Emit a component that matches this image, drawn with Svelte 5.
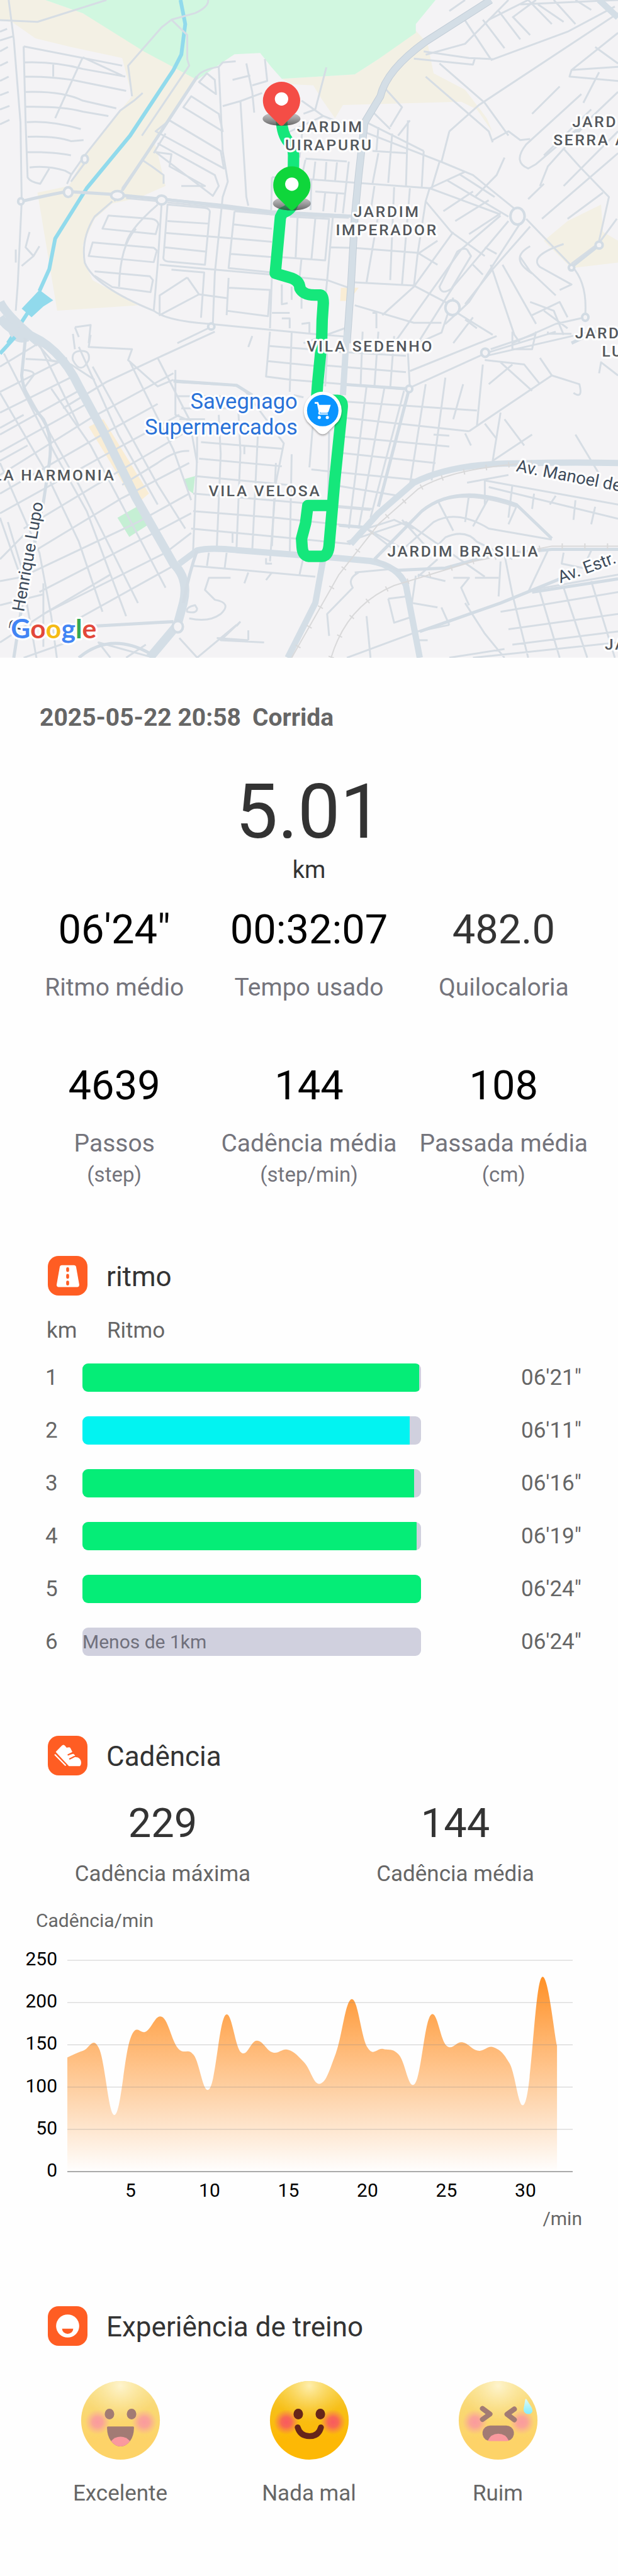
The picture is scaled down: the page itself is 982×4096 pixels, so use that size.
<script>
  const stats = [
    [
      { value: `06'24"`, label: 'Ritmo médio' },
      { value: '00:32:07', label: 'Tempo usado' },
      { value: '482.0', label: 'Quilocaloria', soft: true }
    ],
    [
      { value: '4639', label: 'Passos', unit: '(step)' },
      { value: '144', label: 'Cadência média', unit: '(step/min)' },
      { value: '108', label: 'Passada média', unit: '(cm)' }
    ]
  ];

  const splits = [
    { km: 1, time: `06'21"`, fill: 99.3 },
    { km: 2, time: `06'11"`, fill: 96.6, best: true },
    { km: 3, time: `06'16"`, fill: 97.9 },
    { km: 4, time: `06'19"`, fill: 98.7 },
    { km: 5, time: `06'24"`, fill: 100 },
    { km: 6, time: `06'24"`, fill: 0, note: 'Menos de 1km' }
  ];

  // Steps per minute, one value for each minute of the run
  const cadence = [
    135, 143, 146, 67, 158, 166, 183, 146, 138, 98, 185, 141, 155, 141, 144, 129,
    104, 140, 204, 147, 145, 138, 104, 185, 149, 153, 143, 147, 128, 83, 229, 149
  ];
  const left = 107;
  const right = 910;
  const base = 379;
  const perStep = 336 / 250;
  const stepX = 25.1;
  const px = (i) => left + i * stepX;
  const py = (v) => base - v * perStep;

  function areaPath(values) {
    const p = values.map((v, i) => [px(i), py(v)]);
    const at = (i) => p[Math.max(0, Math.min(p.length - 1, i))];
    let d = `M${left} ${base}L${p[0][0]} ${p[0][1]}`;
    for (let i = 1; i < p.length; i++) {
      const [a, b, c, e] = [at(i - 2), at(i - 1), at(i), at(i + 1)];
      const k = 0.2;
      d += `C${b[0] + (c[0] - a[0]) * k} ${b[1] + (c[1] - a[1]) * k} ${c[0] - (e[0] - b[0]) * k} ${c[1] - (e[1] - b[1]) * k} ${c[0]} ${c[1]}`;
    }
    return d + `V${base}Z`;
  }

  const area = areaPath(cadence);
  const yTicks = [250, 200, 150, 100, 50, 0];
  const xTicks = [5, 10, 15, 20, 25, 30];

  let mood = $state('Nada mal');
  const moods = ['Excelente', 'Nada mal', 'Ruim'];

  // Street network, north and south sheets of the map
  const northStreets = [
    'M0 92L95 100L270 0M22 0L35 180L52 560L55 920L45 1300L40 1420M0 185L35 165M0 145L18 132M0 235L20 215M0 300L20 283M0 370L22 350M0 435L22 420M0 500L24 484M0 568L24 548',
    'M60 212L310 300M60 212L65 560L70 810Q75 830 102 840L125 770M62 285Q140 280 210 315L318 350M62 350Q150 350 210 375L320 415M65 420Q160 415 210 460L295 495M65 488Q160 485 210 510L275 530M68 558Q130 550 205 590M70 625Q140 620 180 645L212 640M210 262L180 380L140 540M135 295V350M210 262L310 345M70 695Q140 695 180 710M75 765Q120 755 165 780L180 795',
    'M528 0Q530 30 495 60L435 90L410 125L325 300L335 440M435 90L475 160L475 270L480 300L360 620M362 425L340 460L305 505L215 710L180 800L170 840M360 730L385 760L415 800V840M215 745L180 830',
    'M598 280L565 285L555 305Q510 320 500 350L380 680L310 860M555 305L565 690L578 830L565 900L545 1250L540 1480M565 485L610 462L665 425M610 462L625 900L630 940M625 290L640 420L645 515M590 365L635 345M672 270L678 370L640 390',
    'M525 335L545 365L548 430L505 375ZM485 440L555 520L565 600L465 490ZM430 550L560 690L568 770L395 600ZM400 655L545 800L555 850L540 895L395 695L435 705L430 760L520 850L460 850M420 610L390 700',
    'M55 920Q110 895 170 875M190 878L285 888M310 895L400 905M425 910L560 935L690 965L890 985M320 905L395 918M425 925L560 950L690 980L885 995M310 870L290 920M285 920L240 990Q205 1090 215 1200Q240 1310 390 1420Q420 1460 500 1475L560 1485L790 1525L890 1540M410 930L400 1210L390 1420',
    'M425 935L520 950Q535 955 532 975L520 1210L425 1195Q412 1190 415 1170ZM425 1010L530 1022M422 1065L560 1085L690 1105M418 1130L525 1150M595 965L690 980M595 965L580 1225L690 1245M592 1025L690 1045M585 1160L690 1175M735 990L835 1000L825 1190L710 1175M755 995L750 1180M800 998L790 1188M765 1180L760 1270',
    'M275 985L385 1000Q400 1005 402 1025L395 1070L260 1045ZM400 935Q320 1060 318 1130M235 1108L390 1132L398 1145L390 1198L225 1170ZM345 1045Q305 1120 302 1310M240 1240L380 1262L388 1280L382 1335L285 1312L240 1260',
    'M405 1210L690 1255L830 1280L885 1315M435 1232L518 1245L510 1452M475 1268L405 1350V1440L505 1345L475 1268M505 1345L575 1362M580 1270L575 1440M580 1315L685 1325L680 1445L575 1420M690 1255L685 1500M715 1300V1390L730 1385M740 1310V1370M765 1350V1410M690 1430H735M715 1455H735V1500M765 1480L785 1475V1520',
    'M828 308L800 500L770 520M765 460L820 530L1120 740L1200 800L1310 960M820 530L725 610M770 545L760 720M775 725L880 738M775 730L765 810M800 738L795 820M828 740L825 825M855 742L850 828M690 810L790 820L900 835L1090 860L1180 785M690 810L688 960M790 820L788 960M800 875L875 885M825 880L820 965M855 885L850 970M885 738L870 975',
    'M920 550L1075 690M945 690L1030 700M960 580L955 690M995 610L985 835M1035 550L1030 850M1075 690L1070 855M1115 740L1095 860M975 400L1020 490L990 580M945 510L990 590M1010 620L1040 550M960 700L945 840M950 850L940 970M1000 855L990 1280M1040 860L1020 1300M960 980L930 1290M845 980L830 1280L825 1370M835 1130L900 1133L1060 1155L1110 1210',
    'M1090 860L1080 920L1145 1060L1230 1170M1090 860L1135 890L1270 980M1080 920L1060 1155L1050 1310L970 1440M1135 825L1290 990M1165 795L1255 900M1125 965L1200 875M1155 1010L1240 915M1190 1070L1270 975M900 1290L1050 1305L1140 1390M900 1395L1050 1475L1120 1475M1110 1100L1060 1160M1150 1060L1050 1310',
    'M1270 985L1170 1140L1000 1568M1290 1010L1150 1310L1060 1568M1320 1020L1190 1380L1155 1440M1345 1035L1250 1230L1180 1390M1335 1000L1450 1215Q1490 1290 1485 1435M1245 1210L1305 1530L1320 1568M1275 1210L1360 1480M1320 1175L1345 1240L1410 1350M1345 1125Q1290 1180 1350 1250M1430 1115Q1340 1170 1370 1220L1450 1300L1420 1325M1230 1130L1260 1160M1200 1210L1225 1255',
    'M1185 1140L1195 1170L1145 1320Q1120 1350 1115 1310L1160 1150Q1175 1130 1185 1140M1450 1205L1520 1110L1565 1000M1290 0L1180 200L1080 250M1320 20L1568 0M1560 30L1440 145L1245 275M1075 235L1190 265L1250 270M1050 268L1200 295L1205 265M1175 80L1245 270M1225 90L1280 220M1265 50L1320 180M1300 75L1345 160M1340 0L1400 110M1365 20L1430 100M1405 0L1460 110M1460 0L1500 45M1360 0L1300 80',
    'M1568 60L1215 480L1140 600M1080 350L1240 600L1250 650M1115 290L1230 470L1290 620M1250 640L1290 600L1320 640L1345 635M1568 150L1450 320L1445 350L1568 370M1510 215L1568 290M1450 320L1568 305M1140 50L1180 0M1140 600L1120 740M1340 0L1240 90',
    'M1475 430L1335 660Q1300 740 1340 770L1360 750L1470 580M1500 500L1380 710M1568 600L1430 850M1568 700L1375 1000M1280 720L1260 800L1205 900M1420 395L1350 520M1490 560L1400 740M1568 420L1440 640M1520 330L1480 470M1370 850L1390 760L1430 680L1470 760L1545 900L1520 1100M1340 910L1380 840M1530 880L1440 1000',
    'M1130 1480L1160 1430L1250 1530M1150 1360L1120 1520L1060 1568M1300 1568L1410 1480L1485 1450M1380 1420L1440 1500M1345 1380L1405 1420L1430 1530M1350 1440L1420 1380L1440 1450M1180 1460L1210 1500M945 1430H955V1500M1200 1450L1150 1568M190 1495L230 1485L225 1568M190 1495L200 1540M540 1490L450 1568M770 1568L890 1490M75 1060L65 1130L85 1170L55 1215M100 1125L85 1170M40 1140V1200'
  ];
  const southStreets = [
    'M0 160L110 40M0 275L170 120M0 370L190 200M0 470L210 260M0 550L230 320M0 655L235 390L440 190M0 740L260 470L400 330M0 830L270 560L455 380M60 900L300 640L480 450M90 1000L310 760L480 600M80 1100L350 870L480 740M100 1190L390 920L485 830M110 1290L420 1010L485 920M200 1310L450 1060',
    'M0 280L110 620L200 960L260 1280M10 100L140 560L220 820L320 1300M60 250L200 700L350 1240M130 260L230 520L420 1170M400 120L480 400L500 600M330 140L440 540L485 770M235 160L400 700L470 900M100 60L200 430M0 600L100 1010L130 1300L150 1568M0 850L60 1160L100 1568M200 70L300 470L400 790',
    'M75 15L130 130L180 150M60 175Q90 180 85 200L60 260M65 125L120 130L180 150L240 220M0 440L60 380M0 590L70 520M230 15L225 70L335 80L325 130L400 250L440 220M190 80L185 10M545 0L400 120L270 230L160 350M205 88Q180 90 185 130Q205 200 225 130Q230 85 205 88',
    'M445 175V380L485 410M445 230L590 245Q615 250 630 290L720 510L700 690M450 295H560M460 350H590M455 400H520M500 410V570L490 1000M555 380L560 560L550 990M605 370L610 550L600 995M655 440L640 1000M510 505L715 535M505 580L715 615M495 660L730 700M490 740L945 810M490 820L700 850L930 895M485 900L890 970M480 545Q445 540 400 600L310 700M590 920V965M620 520V560M700 690L685 1050',
    'M685 0L675 205L740 220L1040 265M680 65L820 85M680 135L820 160M740 0L735 275M745 290L770 300M840 90L1030 110M830 155L1030 185M830 90L825 250M920 0L915 240M960 0L950 250M1000 20L990 260M1035 100L1040 260M640 20L630 70',
    'M800 290L785 620M835 460L830 1040M880 320L1210 360M880 395L1190 455M875 480L1140 525M870 555L1105 600M790 630L1070 680M860 705L1010 750M845 800L940 815M930 250L885 900M975 260L910 900M1025 270L940 850M1080 240L1040 700M1130 210L1095 680M1175 240L1150 400M1225 150L1210 430M1270 370L1250 590L1350 470M1280 400L1330 520M1190 455L1400 200L1470 240Q1480 310 1455 280',
    'M740 560L735 1030M700 600L690 980M1140 475L1100 470M1180 465L1195 520M1230 420L1260 490M1460 470L1520 650M1035 260L1230 100L1410 0M1245 80L1360 10M1235 110L1500 0M1040 180L1260 20M1230 130L1330 150L1370 240M1270 140L1350 270M1300 150L1240 240M1370 120L1400 200M1300 0V80H1350L1360 0M1520 190L1525 140L1568 200M1390 0V10H1450',
    'M1230 680L1568 790M1240 710L1568 855M1230 675V790M1300 700L1290 850M1355 740L1350 810M1410 750L1395 790M1460 770L1455 860M1510 800L1500 880M1290 655L1185 690M880 960L1030 870L1230 1120M950 1040L1070 820Q1150 700 1310 800M1000 1030L1100 870Q1160 810 1240 900L1400 950M1080 1030L1130 940Q1180 900 1210 960L1300 1040M930 900L1020 990M1020 860L1090 1000M1110 770L1150 910M1190 745L1180 870M1240 760L1200 890M1310 800L1290 880M1010 1010L930 900L1000 860L1050 900',
    'M490 1070L620 1090L800 1120M530 1010L525 1070M575 1010L570 1080M630 1100L620 1150M690 1100L675 1135M675 1035V1060H690M770 1030L760 1110M585 1125H530L520 1180L545 1225Q590 1240 560 1290Q530 1330 480 1310M495 1250Q470 1260 475 1280Q500 1290 500 1265ZM455 1400L540 1568M600 1340L500 1490M610 1325L560 1410L670 1420M630 1365V1410M550 1400L630 1410M610 1325L600 1345',
    'M910 1100Q880 1130 895 1170L830 1290L835 1390M990 1085L900 1100M1055 1115L1045 1240L1110 1260M1060 1110L1130 1140M1150 1125H1190L1170 1170L1190 1250M1205 1125H1265M985 1220L1030 1210M985 1220L1000 1330L1050 1300M930 1300L940 1490M1110 1040L1060 1120M1270 1050L1265 1210M1350 1180L1568 1110M1280 1020L1300 1200M1390 1000L1340 1190M1430 1010L1425 1060L1480 1080M1500 1000L1480 1080',
    'M1270 1280L1568 1190M1290 1360L1568 1290M1300 1430L1568 1370M1200 1490L1568 1420M1140 1490L1280 1450M1300 1200L1340 1490M1370 1190L1420 1490M1430 1170L1490 1490M1500 1140L1560 1490M1120 1260L1140 1340M1180 1240L1230 1380L1280 1490M1060 1370L1140 1340M1060 1410H1085M880 1490L1060 1370',
    'M0 1140L60 1120M0 1250L110 1200M20 870L60 1110M0 1420L120 1280L280 1110M60 1490L170 1420L230 1340M280 1490L250 1420L390 1490M0 1040L60 930M110 1150V1440M320 1490L370 1430'
  ];
</script>

<main class="page">
  <svg class="map" viewBox="0 0 1080 1150" role="img" aria-label="Mapa do percurso">
    <defs>
      <linearGradient id="shade" x1="0" y1="0" x2="0" y2="1">
        <stop offset="0" stop-color="#777" stop-opacity=".35" />
        <stop offset="1" stop-color="#333" stop-opacity=".75" />
      </linearGradient>
    </defs>
    <rect width="1080" height="1150" fill="#f4f3f5" />

    <g transform="scale(.6888 .3827)">
      <path fill="#f3f0e4" d="M0 0H115L210 60L500 365L470 440L390 640L400 700L420 850L350 905L285 930L240 1000L210 1120L215 1200L235 1280L350 1395L145 1420L95 880L175 850L215 710L305 505L335 440L310 265L180 215L90 175L30 100L0 95ZM1055 140L960 270L900 340L715 360L740 385L795 390L815 450L850 540L870 480L1170 465L1210 500L1250 605L1235 540L1180 410L1100 335L1085 200ZM1380 1100L1440 1010L1525 935L1530 1060L1568 1100V1200L1450 1225Z" />
      <path fill="#f9edd5" d="M865 1315L910 1315L885 1375H863Z" />
      <path fill="#d1f7e0" d="M115 0H1105L1055 110V150L960 270L900 340L715 360L690 310L660 242L595 248L560 290L500 365L365 235L210 60Z" />
      <path class="river" d="M458 0L470 110L460 250L440 320L330 620L220 860L140 1090L125 1230L100 1330M70 1430L20 1568" />
      <path fill="#91daec" d="M100 1325L135 1372L110 1400L80 1450L55 1410Z" />
      {#each northStreets as d}<path class="street" {d} />{/each}
      <path class="road" d="M55 920Q110 895 170 875L285 888L400 908L560 940L690 970L890 988M310 870L380 680L500 350M1450 1568L1530 1500M1520 1120L1450 1220" />
      <path class="avenue edge" d="M1245 0L1080 190Q980 320 965 440L925 560L910 800L900 990L890 1320L880 1568" />
      <path class="avenue" d="M1245 0L1080 190Q980 320 965 440L925 560L910 800L900 990L890 1320L880 1568M1520 0L1568 80" />
      <path class="avenue wide" d="M0 1380Q15 1440 100 1568M25 1450Q30 1568 70 1540" />
      <g class="round">
        <ellipse cx="173" cy="878" rx="11" ry="22" /><ellipse cx="298" cy="893" rx="16" ry="20" />
        <ellipse cx="410" cy="914" rx="13" ry="20" /><ellipse cx="1313" cy="988" rx="18" ry="38" />
        <ellipse cx="1148" cy="1406" rx="18" ry="34" /><ellipse cx="1520" cy="1120" rx="9" ry="16" />
        <ellipse cx="1450" cy="1223" rx="7" ry="13" /><ellipse cx="536" cy="1492" rx="8" ry="14" />
        <ellipse cx="1485" cy="1450" rx="8" ry="16" /><ellipse cx="215" cy="727" rx="8" ry="18" />
        <ellipse cx="53" cy="920" rx="7" ry="14" />
      </g>
    </g>

    <g transform="translate(0 580) scale(.6888 .3827)">
      <path fill="#f9edd5" d="M225 435L262 400L378 740L345 790Z" />
      <path fill="#c5efd4" d="M298 850L352 795L378 880L328 938ZM465 675L495 660L490 740L475 720Z" />
      <path class="river" d="M38 25L0 100" />
      {#each southStreets as d}<path class="street" {d} />{/each}
      <path class="road" d="M65 20L55 200Q60 300 110 400Q135 480 125 600L110 780L60 1200L35 1490M440 225L600 245L640 290M1038 262L960 800M865 240L1038 262M860 885L930 895L885 970M950 1040L1070 820Q1160 690 1310 790L1400 945" />
      <path class="avenue wide" d="M0 -65Q25 0 60 5Q150 60 200 250L260 450L345 760L440 1060Q480 1130 465 1240L450 1340L380 1490" />
      <path class="avenue" d="M880 0L870 290M455 1060L500 1000Q530 985 600 998L860 1035L940 1048Q1010 1070 1030 1160L1065 1490M820 1040L800 1240L730 1490M1568 600Q1440 595 1320 602Q1150 600 1050 690L960 830L890 970" />
      <path class="road" d="M1065 1370L1270 1240L1420 1130M1350 1190L1568 1130M950 1040L1010 1090L1130 1080L1250 1020L1400 995H1568M500 1000Q480 1100 465 1240M240 1345L440 1325M200 1490Q280 1370 380 1470" />
      <path class="rail" d="M1350 600Q1150 620 1060 720L960 880L860 1110L740 1490M840 1490Q880 1250 1000 1160L1200 1050L1400 980H1568" />
      <path class="rail ties" d="M1350 600Q1150 620 1060 720L960 880L860 1110L740 1490M840 1490Q880 1250 1000 1160L1200 1050L1400 980H1568" />
      <g class="round">
        <ellipse cx="451" cy="1348" rx="13" ry="26" /><ellipse cx="1231" cy="96" rx="10" ry="19" />
        <ellipse cx="1038" cy="262" rx="8" ry="15" />
      </g>
    </g>

    <path class="route" d="M492 210Q493 235 504 248Q514 258 513 275L512 355Q508 368 494 372L490 380L481 478L505 485Q524 490 524 504Q530 516 550 516H560Q565 517 565 530L563 560L562 600L555 672L553 700" />
    <path class="route" d="M570 700H590Q599 700 598 712L585 840L575 955Q573 972 562 973H540Q529 972 528 957L527 942L534 915L538 884H578" />

    <g class="place" text-anchor="middle">
      <text x="577" y="231">JARDIM</text><text x="575" y="263">UIRAPURU</text>
      <text x="676" y="379">JARDIM</text><text x="676" y="411">IMPERADOR</text>
      <text x="647" y="615">VILA SEDENHO</text><text x="463" y="868">VILA VELOSA</text>
      <text x="810" y="973">JARDIM BRASILIA</text>
    </g>
    <g class="place">
      <text x="1000" y="222">JARD</text><text x="967" y="254">SERRA A</text>
      <text x="1005" y="592">JARD</text><text x="1052" y="624">LU</text>
      <text x="1057" y="1136">JA</text>
      <text x="202" y="840" text-anchor="end">LA HARMONIA</text>
    </g>
    <g class="roadname">
      <text transform="translate(901 824) rotate(11)">Av. Manoel de</text>
      <text transform="translate(979 1020) rotate(-20)">Av. Estr.</text>
      <text transform="translate(36 1104) rotate(-80)">R. Henrique Lupo</text>
    </g>
    <g class="shop" text-anchor="end">
      <text x="520" y="715">Savegnago</text><text x="520" y="760">Supermercados</text>
    </g>

    <g class="cartpin" transform="translate(564 718)">
      <path fill="#fff" d="M0-33A33 33 0 0 1 27 19L7 39Q0 44-7 39L-27 19A33 33 0 0 1 0-33Z" />
      <circle r="27.5" fill="#0a94ff" />
      <path fill="#fff" d="M-14-15H-8L-6-10H14L10 2Q9 4 7 4H-3L-5 3V5H9V7H-6Q-9 6-7 2L-10-12H-14Z" />
      <circle cx="-6" cy="12" r="2.8" fill="#fff" /><circle cx="8" cy="12" r="2.8" fill="#fff" />
    </g>

    <g transform="translate(492 176)">
      <path fill="url(#shade)" d="M-33 32C-33 24-18 20 0 20S33 24 33 32C33 38 20 44 0 44S-33 38-33 32Z" />
      <path fill="#f44d46" d="M0-33A33 33 0 0 1 25 21L4 42Q0 46-4 42L-25 21A33 33 0 0 1 0-33Z" />
      <circle cy="-3" r="11.7" fill="#fff" />
    </g>
    <g transform="translate(510 324)">
      <path fill="url(#shade)" d="M-33 32C-33 24-18 20 0 20S33 24 33 32C33 38 20 44 0 44S-33 38-33 32Z" />
      <path fill="#0fd63b" d="M0-33A33 33 0 0 1 25 21L4 42Q0 46-4 42L-25 21A33 33 0 0 1 0-33Z" />
      <circle cy="-2" r="11.7" fill="#fff" />
    </g>

    <text class="google" x="19" y="1116"><tspan fill="#4285f4">G</tspan><tspan fill="#e2483b">o</tspan><tspan fill="#f5bb14">o</tspan><tspan fill="#4285f4">g</tspan><tspan fill="#34a853">l</tspan><tspan fill="#e2483b">e</tspan></text>
  </svg>

  <header class="when"><span>2025-05-22 20:58</span><span>Corrida</span></header>

  <section class="summary">
    <div class="distance">5.01</div>
    <div class="distance-unit">km</div>
    {#each stats as row}
      <div class="stats">
        {#each row as s}
          <div class="stat">
            <div class="value" class:soft={s.soft}>{s.value}</div>
            <div class="label">{s.label}</div>
            {#if s.unit}<div class="unit">{s.unit}</div>{/if}
          </div>
        {/each}
      </div>
    {/each}
  </section>

  <section class="pace">
    <div class="title">
      <svg class="badge" viewBox="40 48 206 206" aria-hidden="true">
        <rect x="40" y="48" width="206" height="206" rx="56" fill="#ff5d23" />
        <path fill="#fff" d="M113 96H175Q185 96 187 105L203 196Q204 209 193 210H96Q84 209 86 196L102 105Q104 96 113 96Z" />
        <path stroke="#ff5d23" stroke-width="15" stroke-linecap="round" d="M143 114V124M143 149V159M143 184V194" />
      </svg>
      <h2>ritmo</h2>
    </div>
    <table>
      <colgroup><col class="c-km" /><col class="c-bar" /><col /></colgroup>
      <thead>
        <tr><th scope="col">km</th><th scope="col" class="th-pace" colspan="2">Ritmo</th></tr>
      </thead>
      <tbody>
        {#each splits as s}
          <tr>
            <td>{s.km}</td>
            <td>
              <div class="track">
                <div class="fill" class:best={s.best} style="width: {s.fill}%"></div>
                {#if s.note}<span class="note">{s.note}</span>{/if}
              </div>
            </td>
            <td class="time">{s.time}</td>
          </tr>
        {/each}
      </tbody>
    </table>
  </section>

  <section class="cadence">
    <div class="title">
      <svg class="badge" viewBox="40 48 206 206" aria-hidden="true">
        <rect x="40" y="48" width="206" height="206" rx="56" fill="#ff5d23" />
        <path fill="#fff" stroke="#fff" stroke-width="6" stroke-linejoin="round" d="M85 132L113 103Q120 96 126 101L136 113L151 111Q156 112 157 118L164 132L147 144L150 151L172 145L178 151L158 163L160 170L181 161L196 164Q209 170 210 186Q211 199 205 203H151Z" />
        <path fill="none" stroke="#ff5d23" stroke-width="7" stroke-linecap="round" d="M146 147L168 136M154 168L178 156" />
        <path stroke="#fff" stroke-width="7" stroke-linecap="round" d="M78 147L131 201" />
      </svg>
      <h2>Cadência</h2>
    </div>
    <div class="pair">
      <div class="stat"><div class="value soft">229</div><div class="label small">Cadência máxima</div></div>
      <div class="stat"><div class="value soft">144</div><div class="label small">Cadência média</div></div>
    </div>
    <div class="axis-title">Cadência/min</div>
    <svg class="chart" viewBox="0 0 982 480" role="img" aria-label="Cadência por minuto">
      <defs>
        <linearGradient id="heat" gradientUnits="userSpaceOnUse" x1="0" y1="70" x2="0" y2={base}>
          <stop offset="0" stop-color="#ff9127" />
          <stop offset="1" stop-color="#ff9127" stop-opacity="0" />
        </linearGradient>
      </defs>
      <path d={area} fill="url(#heat)" />
      {#each yTicks as t}
        <line class="grid" class:zero={t === 0} x1={left} x2={right} y1={py(t)} y2={py(t)} />
        <text x="91" y={py(t) + 8} text-anchor="end">{t}</text>
      {/each}
      {#each xTicks as t}
        <text x={px(t - 1)} y="419" text-anchor="middle">{t}</text>
      {/each}
      <text class="axis-unit" x="925" y="464" text-anchor="end">/min</text>
    </svg>
  </section>

  <section class="feeling">
    <div class="title">
      <svg class="badge" viewBox="40 48 206 206" aria-hidden="true">
        <rect x="40" y="48" width="206" height="206" rx="56" fill="#ff5d23" />
        <circle cx="143" cy="151" r="60" fill="#fff" />
        <path fill="#ff5d23" d="M114 165H172A29 27 0 0 1 114 165Z" />
      </svg>
      <h2>Experiência de treino</h2>
    </div>
    <div class="moods">
      {#each moods as m, i}
        <button type="button" aria-pressed={mood === m} onclick={() => (mood = m)}>
          <svg class="face" class:faded={mood !== m} viewBox="-210 -210 420 420" aria-hidden="true">
            <defs>
              <linearGradient id="skin{i}" x1="0" y1="0" x2="0" y2="1">
                <stop offset="0" stop-color="#f7cf45" /><stop offset=".35" stop-color="#f7bf18" /><stop offset=".75" stop-color="#fdb805" />
              </linearGradient>
              <radialGradient id="shine{i}" cx=".5" cy=".06" r=".46">
                <stop offset="0" stop-color="#fff2ba" stop-opacity=".9" /><stop offset="1" stop-color="#fbdc66" stop-opacity="0" />
              </radialGradient>
              <radialGradient id="blush{i}">
                <stop offset="0" stop-color="#f85a5f" /><stop offset=".4" stop-color="#f85a5f" stop-opacity=".85" /><stop offset="1" stop-color="#f8705a" stop-opacity="0" />
              </radialGradient>
              <linearGradient id="drop{i}" x1="0" y1="0" x2="0" y2="1">
                <stop offset="0" stop-color="#c6f7ee" /><stop offset="1" stop-color="#35e3ff" />
              </linearGradient>
            </defs>
            <circle r="207" fill="url(#skin{i})" />
            <circle r="207" fill="url(#shine{i})" />
            <circle cx="-121" cy="9" r="66" fill="url(#blush{i})" />
            <circle cx="125" cy="9" r="66" fill="url(#blush{i})" />
            {#if i === 2}
              <path fill="none" stroke="#66251a" stroke-width="27" stroke-linecap="round" stroke-linejoin="round" d="M-82-62L-43-33L-82-5M85-59L47-32L85-3" />
              <path fill="#66251a" d="M-41 27H42A41 41 0 0 1 55 107H-54A41 41 0 0 1-41 27Z" />
              <path fill="#f8575f" d="M-54 107Q-38 70 1 70T56 107Q52 109 45 109H-44Q-50 109-54 107Z" />
              <path fill="url(#drop{i})" d="M143-112Q146-115 150-110L177-66Q186-46 173-37Q160-29 145-37Q132-44 134-62Z" />
            {:else}
              <ellipse cx="-58" cy="-33" rx="25" ry="28" fill="#66251a" />
              <ellipse cx="58" cy="-33" rx="25" ry="28" fill="#66251a" />
              {#if i === 0}
                <path fill="#66251a" d="M-66 32H66Q71 32 71 38Q70 84 50 109Q28 137 0 137T-50 109Q-70 84-71 38Q-71 32-66 32Z" />
                <path fill="#f8575f" d="M-50 109Q-30 86 0 86T50 109Q28 137 0 137T-50 109Z" />
              {:else}
                <path fill="none" stroke="#66251a" stroke-width="31" stroke-linecap="round" d="M-61 37Q-48 82 0 83T61 37" />
              {/if}
            {/if}
          </svg>
          <span>{m}</span>
        </button>
      {/each}
    </div>
  </section>
</main>

<style>
  :global(body) {
    margin: 0;
    background: #fefefe;
  }
  .page {
    font-family: Roboto, 'Liberation Sans', sans-serif;
    color: #333;
    padding-bottom: 109px;
    overflow: hidden;
  }
  .map {
    display: block;
    width: 100%;
  }
  .street,
  .road,
  .avenue,
  .river,
  .rail,
  .round ellipse {
    fill: none;
    vector-effect: non-scaling-stroke;
    stroke-linejoin: round;
  }
  .street {
    stroke: #d6dde4;
    stroke-width: 3px;
  }
  .road {
    stroke: #d3dce4;
    stroke-width: 5px;
  }
  .avenue {
    stroke: #d4dee6;
    stroke-width: 10px;
  }
  .avenue.wide {
    stroke-width: 14px;
  }
  .avenue.edge {
    stroke: #c3ced8;
    stroke-width: 12px;
  }
  .river {
    stroke: #91daec;
    stroke-width: 6px;
  }
  .rail {
    stroke: #d9d9da;
    stroke-width: 2px;
  }
  .rail.ties {
    stroke-width: 9px;
    stroke-dasharray: 2 34;
  }
  .round ellipse {
    fill: #f4f3f5;
    stroke: #d3dce4;
    stroke-width: 4px;
  }
  .route {
    fill: none;
    stroke: #15e77b;
    stroke-width: 20px;
    stroke-linecap: round;
    stroke-linejoin: round;
  }
  .map text {
    paint-order: stroke;
    stroke: #fff;
    stroke-width: 7px;
    stroke-linejoin: round;
  }
  .place {
    font-size: 27px;
    font-weight: 500;
    letter-spacing: 3px;
    fill: #53575c;
  }
  .roadname {
    font-size: 30px;
    font-weight: 400;
    fill: #3e4c5c;
  }
  .shop {
    font-size: 38px;
    font-weight: 400;
    fill: #2a72d8;
  }
  .cartpin {
    filter: drop-shadow(0 2px 2px rgba(0, 0, 0, 0.35));
  }
  .google {
    font-family: Lato, Roboto, sans-serif;
    font-size: 47px;
    font-weight: 700;
  }
  .when {
    display: flex;
    gap: 18px;
    padding: 71px 63px 0;
    font-size: 39px;
    line-height: 48px;
    font-weight: 700;
    color: #666;
  }
  .summary {
    text-align: center;
    padding: 58px 27px 0;
  }
  .distance {
    font-size: 120px;
    line-height: 136px;
  }
  .distance-unit {
    font-size: 38px;
    line-height: 48px;
  }
  .stats {
    display: grid;
    grid-template-columns: repeat(3, 1fr);
    margin-top: 33px;
  }
  .stats + .stats {
    margin-top: 94px;
  }
  .stat {
    text-align: center;
    white-space: nowrap;
  }
  .value {
    font-size: 65px;
    line-height: 76px;
    color: #000;
  }
  .value.soft {
    color: #333;
  }
  .label {
    margin-top: 30px;
    font-size: 39px;
    line-height: 48px;
    color: #74747c;
  }
  .label.small {
    margin-top: 21px;
    font-size: 35px;
    line-height: 44px;
    color: #666;
  }
  .unit {
    margin-top: 4px;
    font-size: 33px;
    line-height: 44px;
    color: #74747c;
  }
  .title {
    display: flex;
    align-items: center;
    gap: 30px;
    padding-left: 76px;
  }
  .badge {
    width: 63px;
    height: 63px;
  }
  h2 {
    margin: 0;
    padding-top: 4px;
    font-size: 44px;
    line-height: 52px;
    font-weight: 400;
  }
  .pace {
    margin-top: 107px;
  }
  table {
    width: calc(100% - 130px);
    margin: 34px 58px 0 72px;
    border-collapse: collapse;
    table-layout: fixed;
    font-size: 35px;
    line-height: 44px;
    color: #666;
  }
  th,
  td {
    padding: 0;
    font-weight: 400;
    text-align: left;
  }
  th {
    padding: 0 0 11px 2px;
  }
  .th-pace {
    padding-left: 39px;
  }
  tbody tr {
    height: 84px;
  }
  .c-km {
    width: 59px;
  }
  .c-bar {
    width: 63.2%;
  }
  .track {
    height: 45px;
    border-radius: 9px;
    overflow: hidden;
    background: #d0d0de;
    display: flex;
    align-items: center;
  }
  .fill {
    height: 100%;
    background: #05ed77;
  }
  .fill.best {
    background: #02f3f1;
  }
  .note {
    font-size: 30px;
    color: #70707c;
  }
  .time {
    text-align: right;
  }
  .cadence {
    margin-top: 107px;
  }
  .pair {
    display: grid;
    grid-template-columns: 1fr 1fr;
    padding: 38px 26px 0;
  }
  .axis-title {
    margin: 32px 57px 0;
    font-size: 30px;
    line-height: 40px;
    color: #666;
  }
  .chart {
    display: block;
    width: 100%;
    font-size: 30px;
  }
  .chart text {
    fill: #000;
  }
  .chart .axis-unit {
    fill: #666;
  }
  .grid {
    stroke: #888;
    stroke-opacity: 0.4;
    stroke-width: 1px;
  }
  .grid.zero {
    stroke: #aaa;
    stroke-opacity: 1;
    stroke-width: 2px;
  }
  .feeling {
    margin-top: 113px;
  }
  .moods {
    display: grid;
    grid-template-columns: repeat(3, 1fr);
    padding: 55px 41px 0;
  }
  button {
    display: flex;
    flex-direction: column;
    align-items: center;
    gap: 31px;
    padding: 0;
    border: 0;
    background: none;
    font: inherit;
    font-size: 35px;
    line-height: 44px;
    color: #666;
    cursor: pointer;
  }
  .face {
    width: 127px;
    height: 127px;
  }
  .face.faded {
    opacity: 0.6;
  }
</style>
